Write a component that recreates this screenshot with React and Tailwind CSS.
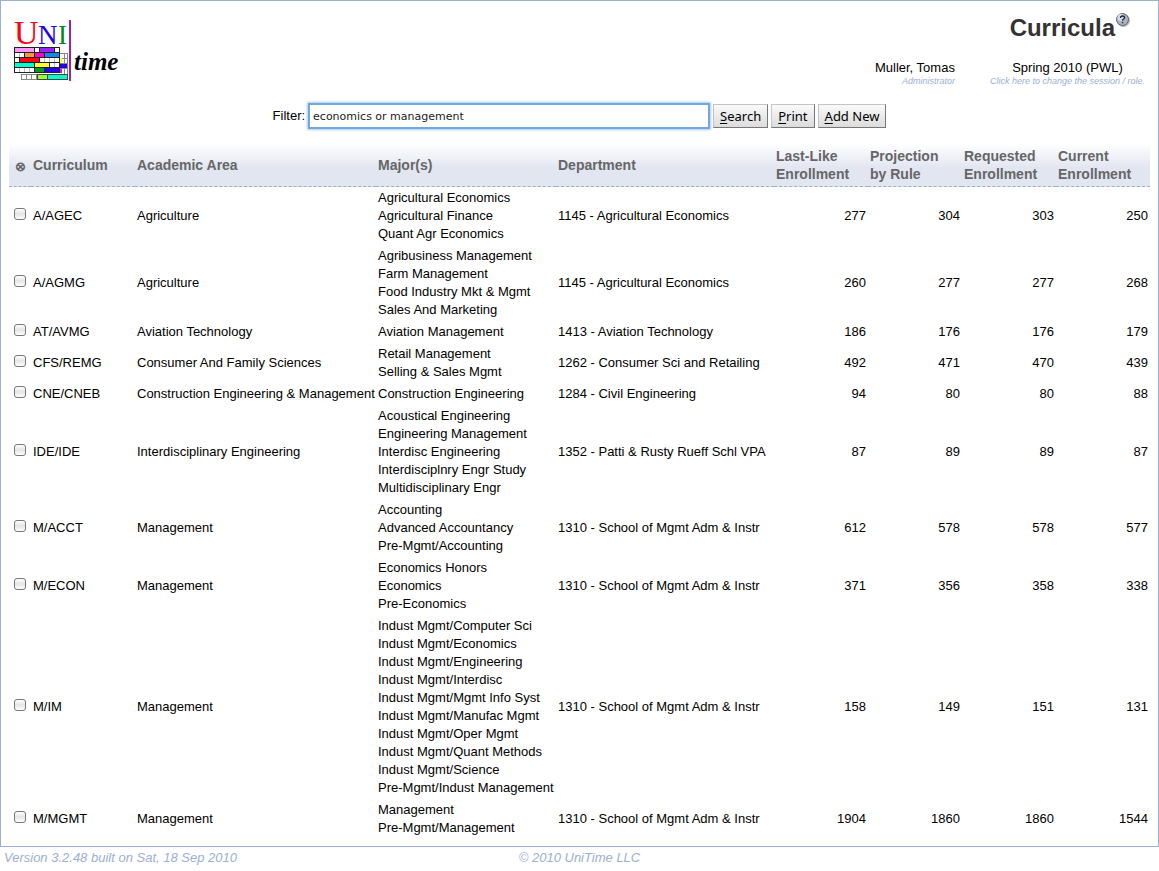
import React from "react";

const rows = [
  ["A/AGEC", "Agriculture", ["Agricultural Economics", "Agricultural Finance", "Quant Agr Economics"], "1145 - Agricultural Economics", [277, 304, 303, 250]],
  ["A/AGMG", "Agriculture", ["Agribusiness Management", "Farm Management", "Food Industry Mkt & Mgmt", "Sales And Marketing"], "1145 - Agricultural Economics", [260, 277, 277, 268]],
  ["AT/AVMG", "Aviation Technology", ["Aviation Management"], "1413 - Aviation Technology", [186, 176, 176, 179]],
  ["CFS/REMG", "Consumer And Family Sciences", ["Retail Management", "Selling & Sales Mgmt"], "1262 - Consumer Sci and Retailing", [492, 471, 470, 439]],
  ["CNE/CNEB", "Construction Engineering & Management", ["Construction Engineering"], "1284 - Civil Engineering", [94, 80, 80, 88]],
  ["IDE/IDE", "Interdisciplinary Engineering", ["Acoustical Engineering", "Engineering Management", "Interdisc Engineering", "Interdisciplnry Engr Study", "Multidisciplinary Engr"], "1352 - Patti & Rusty Rueff Schl VPA", [87, 89, 89, 87]],
  ["M/ACCT", "Management", ["Accounting", "Advanced Accountancy", "Pre-Mgmt/Accounting"], "1310 - School of Mgmt Adm & Instr", [612, 578, 578, 577]],
  ["M/ECON", "Management", ["Economics Honors", "Economics", "Pre-Economics"], "1310 - School of Mgmt Adm & Instr", [371, 356, 358, 338]],
  ["M/IM", "Management", ["Indust Mgmt/Computer Sci", "Indust Mgmt/Economics", "Indust Mgmt/Engineering", "Indust Mgmt/Interdisc", "Indust Mgmt/Mgmt Info Syst", "Indust Mgmt/Manufac Mgmt", "Indust Mgmt/Oper Mgmt", "Indust Mgmt/Quant Methods", "Indust Mgmt/Science", "Pre-Mgmt/Indust Management"], "1310 - School of Mgmt Adm & Instr", [158, 149, 151, 131]],
  ["M/MGMT", "Management", ["Management", "Pre-Mgmt/Management"], "1310 - School of Mgmt Adm & Instr", [1904, 1860, 1860, 1544]],
];

const frontBlocks = [
  [14, 47, 20, "#ff99ff"], [39, 47, 15, "#9922ff"],
  [24, 52, 10, "#ff9933"], [34, 52, 10, "#ff00cc"], [44, 52, 15, "#1188ee"],
  [19, 57, 20, "#ff0011"],
  [14, 62, 20, "#00ffcc"], [34, 62, 15, "#ffff33"],
  [34, 67, 10, "#009922"], [44, 67, 15, "#2200ee"],
];

function Logo() {
  return (
    <svg width="112" height="74" viewBox="12 10 112 74" role="img" aria-label="UniTime" className="shrink-0">
      <g fontFamily="Liberation Serif, serif">
        <text x="14" y="44" fontSize="34" fill="#ff0011">U</text>
        <text x="38" y="44" fontSize="27" fill="#2200ee">N</text>
        <text x="58" y="44" fontSize="27" fill="#008822">I</text>
        <text x="74" y="70" fontSize="25" fontWeight="bold" fontStyle="italic" fill="#000">time</text>
      </g>
      <g shapeRendering="crispEdges">
        <rect x="21" y="53" width="46" height="26" fill="#fff" />
        <path d="M21.500 74V79.500H67.500V53.500H60M26.500 74V79M31.500 74V79M36.500 74V79M64.500 54V74M60 58.500H67M60 63.500H67M60 68.500H67M22 74.500H67" fill="none" stroke="#888" />
        <rect x="60" y="58" width="2" height="5" fill="#ffff33" />
        <rect x="60" y="64" width="7" height="4" fill="#2200ee" />
        <rect x="59" y="69" width="3" height="4" fill="#ff00cc" />
        <rect x="37.500" y="74.500" width="10" height="5" fill="#99ff33" stroke="#444" />
        <rect x="47.500" y="74.500" width="20" height="5" fill="#00ffcc" stroke="#444" />
        <rect x="14.500" y="47.500" width="45" height="25" fill="#fff" stroke="#222" />
        <path d="M19.500 48V72M24.500 48V72M29.500 48V72M34.500 48V72M39.500 48V72M44.500 48V72M49.500 48V72M54.500 48V72" stroke="#bbb" />
        <path d="M14 52.500H60M14 57.500H60M14 62.500H60M14 67.500H60" stroke="#222" />
        {frontBlocks.map(([x, y, w, c]) => (
          <rect key={`${x}-${y}`} x={x + 0.5} y={y + 0.5} width={w} height="5" fill={c} stroke="#222" />
        ))}
        <rect x="69" y="20" width="2" height="61" fill="#9922aa" />
      </g>
    </svg>
  );
}

function HelpIcon() {
  return (
    <svg width="16" height="16" viewBox="0 0 16 16" aria-hidden="true">
      <circle cx="8.500" cy="8.500" r="6.500" fill="#b8b8b8" />
      <circle cx="7.500" cy="7.500" r="6" fill="#a9b3c4" stroke="#5c6470" />
      <circle cx="6" cy="5.500" r="3.500" fill="#d5dce8" />
      <path d="M5.500 6Q5.500 4 7.500 4T9.500 5.800Q9.500 6.800 7.600 7.800V8.800M7.600 10V11.200" fill="none" stroke="#223" strokeWidth="1.300" />
    </svg>
  );
}

function KeyButton({ label }) {
  return (
    <button
      type="button"
      className="h-6 border border-t-[#c4c4c4] border-r-[#777] border-b-[#777] border-l-[#c4c4c4] bg-linear-to-b from-[#fafafa] to-[#dcdcdc] px-[6px] font-['Noto_Sans',sans-serif] text-[13px] leading-5 text-black"
    >
      <span className="underline underline-offset-2">{label[0]}</span>
      {label.slice(1)}
    </button>
  );
}

const headers = ["Curriculum", "Academic Area", "Major(s)", "Department", "Last-Like Enrollment", "Projection by Rule", "Requested Enrollment", "Current Enrollment"];

export default function App() {
  return (
    <div className="bg-white font-['Liberation_Sans',Arial,sans-serif] text-[13px] leading-[18px] text-black">
      <main className="border border-[#9cb0d3] px-2 pb-[7px]">
        <header className="flex items-start justify-between pt-[9px] pl-[3px]">
          <Logo />
          <div className="flex flex-col items-end pt-[2px] pr-[5px]">
            <div className="mr-[14px] flex items-start">
              <h1 className="text-2xl font-bold text-[#333]">Curricula</h1>
              <button type="button" aria-label="Help"><HelpIcon /></button>
            </div>
            <div className="mt-[15px] flex gap-[35px]">
              <div className="text-right">
                <div>Muller, Tomas</div>
                <div className="text-[9px] leading-[9px] text-[#9cb0d3] italic">Administrator</div>
              </div>
              <div className="text-center">
                <div>Spring 2010 (PWL)</div>
                <a href="#session" className="block text-[9px] leading-[9px] text-[#9cb0d3] italic">Click here to change the session / role.</a>
              </div>
            </div>
          </div>
        </header>
        <form className="mt-[17px] flex items-center justify-center gap-[3px]" onSubmit={(e) => e.preventDefault()}>
          <label htmlFor="filter">Filter:</label>
          <input
            id="filter"
            type="text"
            defaultValue="economics or management"
            className="h-[26px] w-[402px] border-2 border-[#74a7dc] px-[3px] font-['DejaVu_Sans',sans-serif] text-[11px] text-[#222] shadow-[0_0_2px_1px_#a8cbee] outline-none"
          />
          <KeyButton label="Search" />
          <KeyButton label="Print" />
          <KeyButton label="Add New" />
        </form>
        <table className="mt-[15px] w-full table-fixed border-collapse">
          <colgroup>
            <col className="w-[22px]" />
            <col className="w-[104px]" />
            <col className="w-[241px]" />
            <col className="w-[180px]" />
            <col className="w-[218px]" />
            <col className="w-[94px]" />
            <col className="w-[94px]" />
            <col className="w-[94px]" />
            <col className="w-[94px]" />
          </colgroup>
          <thead className="bg-linear-to-b from-white via-[#e2e6f1] via-55% to-[#e2e6f1]">
            <tr className="text-left text-[#666]">
              <th className="border-b border-dashed border-[#9cb0d3] pt-[3px] text-center font-bold">⊗</th>
              {headers.map((h) => (
                <th key={h} className="border-b border-dashed border-[#9cb0d3] pt-[3px] pr-3 pb-[3px] pl-[2px] text-sm leading-[18px] font-bold">{h}</th>
              ))}
            </tr>
          </thead>
          <tbody>
            {rows.map(([code, area, majors, dept, nums]) => (
              <tr key={code}>
                <td className="px-[5px] pb-[5px]">
                  <input
                    type="checkbox"
                    aria-label={`Select ${code}`}
                    className="block size-3 appearance-none rounded-[3px] border border-[#777] bg-linear-to-b from-white via-[#e4e4e4] to-white"
                  />
                </td>
                <td className="p-[2px]">{code}</td>
                <td className="p-[2px] whitespace-nowrap">{area}</td>
                <td className="p-[2px] whitespace-nowrap">
                  {majors.map((m) => <div key={m}>{m}</div>)}
                </td>
                <td className="p-[2px] whitespace-nowrap">{dept}</td>
                {nums.map((n, i) => <td key={i} className="p-[2px] text-right">{n}</td>)}
              </tr>
            ))}
          </tbody>
        </table>
      </main>
      <footer className="grid grid-cols-[1fr_auto_1fr] px-1 pt-[2px] text-[#9cb0d3] italic">
        <span>Version 3.2.48 built on Sat, 18 Sep 2010</span>
        <span>© 2010 UniTime LLC</span>
      </footer>
    </div>
  );
}
